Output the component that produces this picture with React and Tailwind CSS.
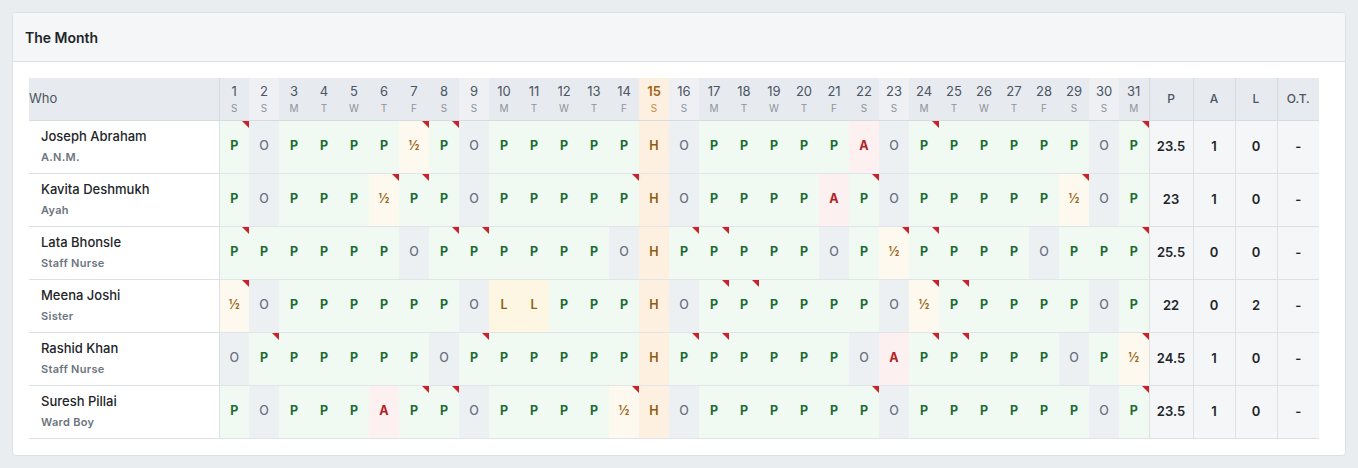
import React from 'react'

const dayLetters = 'SSMTWTFSSMTWTFSSMTWTFSSMTWTFSSM'
const sundays = [2, 9, 16, 23, 30]
const holiday = 15

const staff = [
  { name: 'Joseph Abraham', role: 'A.N.M.', days: 'POPPPPhPOPPPPPHOPPPPPAOPPPPPPOP', flags: [1, 7, 8, 24, 31], p: '23.5', a: 1, l: 0 },
  { name: 'Kavita Deshmukh', role: 'Ayah', days: 'POPPPhPPOPPPPPHOPPPPAPOPPPPPhOP', flags: [6, 7, 14, 22, 29], p: '23', a: 1, l: 0 },
  { name: 'Lata Bhonsle', role: 'Staff Nurse', days: 'PPPPPPOPPPPPPOHPPPPPOPhPPPPOPPP', flags: [1, 8, 9, 16, 17, 23, 24, 31], p: '25.5', a: 0, l: 0 },
  { name: 'Meena Joshi', role: 'Sister', days: 'hOPPPPPPOLLPPPHOPPPPPPOhPPPPPOP', flags: [1, 17, 18, 24, 25], p: '22', a: 0, l: 2 },
  { name: 'Rashid Khan', role: 'Staff Nurse', days: 'OPPPPPPOPPPPPPHPPPPPPOAPPPPPOPh', flags: [2, 9, 16, 17, 24, 25, 31], p: '24.5', a: 1, l: 0 },
  { name: 'Suresh Pillai', role: 'Ward Boy', days: 'POPPPAPPOPPPPhHOPPPPPPOPPPPPPOP', flags: [7, 8, 14, 22, 31], p: '23.5', a: 1, l: 0 },
]

const cellStyle = {
  P: 'bg-[#f0f9f2] text-[#1f6b32] font-bold',
  O: 'bg-[#edf0f3] text-[#6b7280] font-medium',
  h: 'bg-[#fef9ee] text-[#9a6416] font-semibold',
  A: 'bg-[#fcf0f0] text-[#b21f24] font-bold',
  H: 'bg-[#fdf0e1] text-[#8f5a12] font-semibold',
  L: 'bg-[#fdf6e2] text-[#8a6212] font-semibold',
}

function DayHead({ n }) {
  const isHoliday = n === holiday
  const isSunday = sundays.includes(n)
  const bg = isHoliday ? 'bg-[#fdf0e1]' : isSunday ? 'bg-[#eef0f3]' : 'bg-[#e7eaee]'
  return (
    <th className={`${bg} p-0 font-normal align-middle border-b border-[#d6dbe1]`}>
      <div className="flex flex-col items-center leading-none">
        <span className={isHoliday ? 'text-[13px] font-semibold text-[#a2600e]' : 'text-[13px] text-[#4b5563]'}>{n}</span>
        <span className={isHoliday ? 'text-[10px] mt-[5px] text-[#c38d45]' : 'text-[10px] mt-[5px] text-[#8d949c]'}>{dayLetters[n - 1]}</span>
      </div>
    </th>
  )
}

function DayCell({ v, flagged }) {
  return (
    <td className={`${cellStyle[v]} relative p-0 text-center text-[12.5px] border-b border-[#e1e5ea]`}>
      {v === 'h' ? '½' : v}
      {flagged && (
        <span className="absolute top-0 right-0 w-0 h-0 border-t-[7px] border-l-[7px] border-t-[#c8232a] border-l-transparent" />
      )}
    </td>
  )
}

export default function App() {
  const nums = Array.from({ length: 31 }, (_, i) => i + 1)

  return (
    <div className="min-h-screen bg-[#eaedf0] p-3" style={{ fontFamily: 'Inter, "Noto Sans", sans-serif' }}>
      <div className="bg-white border border-[#dde1e6] rounded-[4px] overflow-hidden">
        <div className="h-[49px] px-3 flex items-center bg-[#f5f6f8] border-b border-[#dde1e6]">
          <h3 className="text-[14px] font-semibold text-[#212529]">The Month</h3>
        </div>

        <div className="px-4 pt-4 pb-4">
          <table className="table-fixed border-collapse w-[1290px]">
            <colgroup>
              <col className="w-[190px]" />
              {nums.map(n => <col key={n} className="w-[30px]" />)}
              <col className="w-[44px]" />
              <col className="w-[42px]" />
              <col className="w-[42px]" />
              <col className="w-[42px]" />
            </colgroup>
            <thead>
              <tr className="h-[42px]">
                <th className="bg-[#e7eaee] text-left font-normal text-[13px] text-[#4b5563] p-0 border-b border-r border-[#d6dbe1]">Who</th>
                {nums.map(n => <DayHead key={n} n={n} />)}
                <th className="bg-[#e7eaee] font-medium text-[12px] text-[#4b5563] p-0 border-b border-l border-[#d6dbe1]">P</th>
                <th className="bg-[#e7eaee] font-medium text-[12px] text-[#4b5563] p-0 border-b border-l border-[#d6dbe1]">A</th>
                <th className="bg-[#e7eaee] font-medium text-[12px] text-[#4b5563] p-0 border-b border-l border-[#d6dbe1]">L</th>
                <th className="bg-[#e7eaee] font-medium text-[12px] text-[#4b5563] p-0 border-b border-l border-[#d6dbe1]">O.T.</th>
              </tr>
            </thead>
            <tbody>
              {staff.map(s => (
                <tr key={s.name} className="h-[53px]">
                  <td className="pl-3 p-0 border-b border-r border-[#dde1e6]">
                    <div className="text-[13px] font-medium text-[#212529] leading-none">{s.name}</div>
                    <div className="text-[11px] font-semibold text-[#6c757d] tracking-[0.3px] leading-none mt-[9px]">{s.role}</div>
                  </td>
                  {s.days.split('').map((v, i) => (
                    <DayCell key={i} v={v} flagged={s.flags.includes(i + 1)} />
                  ))}
                  <td className="bg-[#f5f6f8] text-center text-[13px] font-semibold text-[#212529] p-0 border-b border-l border-[#dde1e6]">{s.p}</td>
                  <td className="bg-[#f5f6f8] text-center text-[13px] font-semibold text-[#212529] p-0 border-b border-l border-[#dde1e6]">{s.a}</td>
                  <td className="bg-[#f5f6f8] text-center text-[13px] font-semibold text-[#212529] p-0 border-b border-l border-[#dde1e6]">{s.l}</td>
                  <td className="bg-[#f5f6f8] text-center text-[13px] font-semibold text-[#212529] p-0 border-b border-l border-[#dde1e6]">-</td>
                </tr>
              ))}
            </tbody>
          </table>
        </div>
      </div>
    </div>
  )
}
